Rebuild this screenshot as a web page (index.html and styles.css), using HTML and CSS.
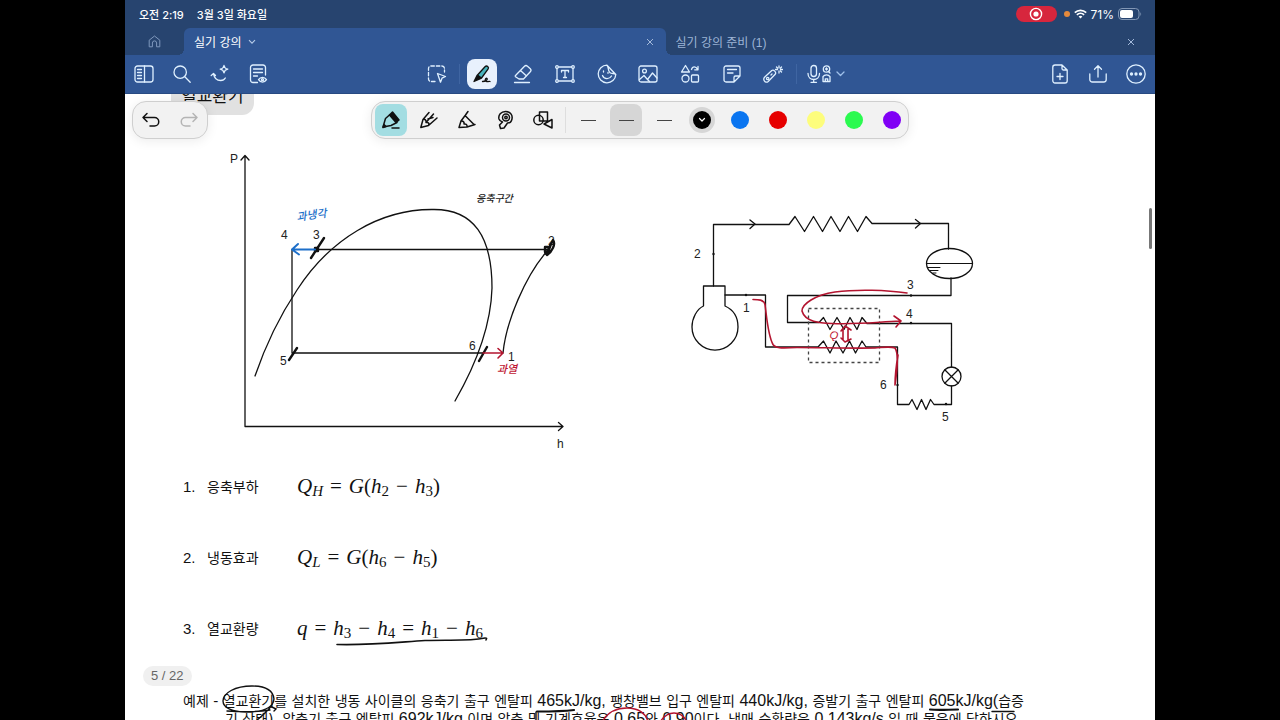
FILE: index.html
```html
<!DOCTYPE html>
<html lang="ko">

<head>
    <meta charset="UTF-8">
    <meta name="viewport" content="width=device-width, initial-scale=1.0">
    <title>실기 강의</title>
    <link rel="stylesheet" href="styles.css">
</head>

<body>
    <div class="app">
        <!-- Status bar -->
        <div class="status-bar">
            <div class="status-left">
                <span>오전 2:19</span>
                <span>3월 3일 화요일</span>
            </div>
            <div class="status-right">
                <span class="record">
                    <svg width="14" height="14" viewBox="0 0 14 14" fill="none" stroke="#fff" stroke-width="1.4"><circle cx="7" cy="7" r="5.6"/><circle cx="7" cy="7" r="2.6" fill="#fff" stroke="none"/></svg>
                </span>
                <span class="mic-dot"></span>
                <svg class="wifi" width="13" height="10" viewBox="0 0 13 10" fill="none" stroke="#fff" stroke-width="1.7"><path d="M.8 3.6a8.2 8.2 0 0 1 11.4 0M2.9 5.9a5.2 5.2 0 0 1 7.2 0"/><path d="M6.5 9.6 4.6 7.6a2.7 2.7 0 0 1 3.8 0z" fill="#fff" stroke="none"/></svg>
                <span class="battery-text">71%</span>
                <svg width="24" height="12" viewBox="0 0 24 12" fill="none"><rect x=".5" y=".5" width="20.5" height="11" rx="3.5" stroke="#8297b5"/><rect x="2" y="2" width="13" height="8" rx="2" fill="#fff"/><path d="M22.4 4.2c1 .5 1 3.1 0 3.6z" fill="#8297b5"/></svg>
            </div>
        </div>

        <!-- Document tabs -->
        <nav class="tabs">
            <button class="tab-home" aria-label="홈">
                <svg width="13" height="13" viewBox="0 0 13 13" fill="none" stroke="currentColor" stroke-linejoin="round"><path d="M1.2 5.2 6.5 1l5.3 4.2v6.6H8.6V8a2.1 2.1 0 0 0-4.2 0v3.8H1.2z"/></svg>
            </button>
            <div class="tab active">
                <a href="#">실기 강의</a>
                <svg class="tab-caret" width="8" height="6" viewBox="0 0 8 6" fill="none" stroke="currentColor" stroke-width="1.1"><path d="m1 1.2 3 3 3-3"/></svg>
                <button class="tab-close" aria-label="닫기"><svg width="8" height="8" viewBox="0 0 8 8" stroke="currentColor"><path d="m1 1 6 6M7 1 1 7"/></svg></button>
            </div>
            <div class="tab">
                <a href="#">실기 강의 준비 (1)</a>
                <button class="tab-close" aria-label="닫기"><svg width="8" height="8" viewBox="0 0 8 8" stroke="currentColor"><path d="m1 1 6 6M7 1 1 7"/></svg></button>
            </div>
        </nav>

        <!-- Main toolbar -->
        <header class="toolbar">
            <div class="tool-group">
                <button class="tool" aria-label="사이드바">
                    <svg viewBox="0 0 20 20"><rect x="1" y="2" width="18" height="16" rx="2.5"/><path d="M10.5 2v16M3.5 5.5h4M3.5 8.5h4M3.5 11.5h4M3.5 14.5h4"/></svg>
                </button>
                <button class="tool" aria-label="검색">
                    <svg viewBox="0 0 20 20"><circle cx="8.2" cy="8.2" r="6.2"/><path d="m12.8 12.8 5.4 5.4"/></svg>
                </button>
                <button class="tool" aria-label="AI">
                    <svg viewBox="0 0 20 20"><path d="M1.200 11.500 3.500 9.500l2 2M3.500 9.800c.8 4.500 4 6.700 7.200 6.700 2 0 3.800-1 4.600-2.500"/><path d="M14 1.500c.4 2.300 1.300 3.200 3.800 3.700-2.500.5-3.400 1.400-3.800 3.700-.4-2.300-1.300-3.200-3.800-3.700 2.500-.5 3.400-1.400 3.800-3.700z"/></svg>
                </button>
                <button class="tool" aria-label="문서 보기">
                    <svg viewBox="0 0 20 20"><path d="M9.500 18.500H5A2.500 2.500 0 0 1 2.500 16V3.500A2.500 2.500 0 0 1 5 1h10a2.500 2.500 0 0 1 2.500 2.500V11M5.500 5h9M5.500 8.500h9M5.500 12h4"/><path d="M10.500 15.700c2-3.200 6-3.200 8 0-2 3.200-6 3.200-8 0z"/><circle cx="14.500" cy="15.700" r="1"/></svg>
                </button>
            </div>

            <div class="tool-group tool-center">
                <button class="tool" aria-label="올가미">
                    <svg viewBox="0 0 20 20"><path stroke-dasharray="3.500 2" d="M8 17.500H4A2.500 2.500 0 0 1 1.500 15V4.500A2.500 2.500 0 0 1 4 2h11a2.500 2.500 0 0 1 2.500 2.500V8"/><path d="m10.500 9.500 8 3-3.500 1.700-1.500 4z"/></svg>
                </button>
                <span class="divider"></span>
                <div class="pens">
                    <button class="tool selected" aria-label="펜">
                        <svg viewBox="0 0 20 20"><path fill="#48b3bd" d="M5.500 11 13 2.700c1.800-1.800 4.500.3 3 2.500L9.500 14z"/><path fill="#111" d="m2 17.500 3-6 4 3z"/><path d="M10.500 17.500c3 0 5.500-2 4.500-3s-2.500 1.500-1.500 2.700 3-.2 4.500.3"/></svg>
                    </button>
                    <button class="tool" aria-label="지우개">
                        <svg viewBox="0 0 20 20"><path d="m2.500 11.500 9-9.300c1-1 2-1 3 0l2.800 2.600c1 1 1 2 0 3L10.500 15H6l-3.500-2.300c-.4-.4-.4-.8 0-1.200zM7.500 6.500l6 5.500M1.500 18.500h15"/></svg>
                    </button>
                    <button class="tool" aria-label="텍스트">
                        <svg viewBox="0 0 20 20"><path d="M2 3h16v14H2zM6.500 8V6.500h7V8M10 6.500v7M8.500 13.500h3"/><g fill="#305694"><circle cx="2" cy="3" r="1.300"/><circle cx="18" cy="3" r="1.300"/><circle cx="2" cy="17" r="1.300"/><circle cx="18" cy="17" r="1.300"/></g></svg>
                    </button>
                    <button class="tool" aria-label="스티커">
                        <svg viewBox="0 0 20 20"><path d="M10 1.200a8.800 8.800 0 1 0 8.800 9.300zM10 1.200c2 2 .5 5.500 3 7.500 1.700 1.300 4.500.3 5.800 1.800M5.500 11.500c1.500 4 7 4 9 .5"/><path d="M6.500 7v1M11 8.500v.8"/></svg>
                    </button>
                    <button class="tool" aria-label="이미지">
                        <svg viewBox="0 0 20 20"><rect x="1" y="2" width="18" height="16" rx="2"/><circle cx="6.500" cy="7" r="1.900"/><path d="m1.500 15.500 4.500-4 3.500 4L14.500 9l4.500 5M9.500 15.500l2 2"/></svg>
                    </button>
                    <button class="tool" aria-label="도형">
                        <svg viewBox="0 0 20 20"><path d="m5.500 1.500 4 6.500h-8zM11.500 5.500c1-3.500 4.500-3.500 6 0M18 2.500v3.300h-3.300"/><circle cx="5.500" cy="14.500" r="3.500"/><rect x="11.500" y="11" width="7" height="7" rx="1"/></svg>
                    </button>
                    <button class="tool" aria-label="메모">
                        <svg viewBox="0 0 20 20"><path d="M12 18H4a2 2 0 0 1-2-2V4a2 2 0 0 1 2-2h12a2 2 0 0 1 2 2v8zM12 18v-4.500a1.500 1.500 0 0 1 1.500-1.500H18M5.500 5.500h9M5.500 9h5.500"/></svg>
                    </button>
                    <button class="tool" aria-label="레이저">
                        <svg viewBox="0 0 20 20"><path d="m1.800 13 7-6.500c1.700-1.500 5 2 3.400 3.700l-7 7.300c-2.700 2.400-6-2-3.400-4.500z"/><circle cx="4.700" cy="14.500" r="1.200"/><path d="m8 11 1-1M16 2v2M16 7v2M12.500 5.500h2M17.500 5.500h2M13.500 3l1 1M17.500 7l1 1M18.500 3l-1 1"/></svg>
                    </button>
                </div>
                <span class="divider"></span>
                <button class="tool tool-wide" aria-label="녹음">
                    <svg class="wide" viewBox="0 0 26 20"><rect x="5" y="1.500" width="5.500" height="11" rx="2.700"/><path d="M2 9.500c0 8 11.500 8 11.500 0M7.700 15.500V18M5 18.300h5.500"/><circle cx="20.500" cy="5" r="3.200"/><path d="M19.500 5h2M20.500 4v2M22.500 7.500l1.500 1.500M17 17.500v-4.800c1.500-2.500 5.500-2.500 7 0v4.800zM19.300 17.500v-2.700h2.400v2.700"/></svg>
                    <svg class="caret" viewBox="0 0 9 6"><path d="m1 1 3.500 3.500L8 1"/></svg>
                </button>
            </div>

            <div class="tool-group tool-end">
                <button class="tool" aria-label="페이지 추가">
                    <svg viewBox="0 0 20 20"><path d="M12 1H5a2.200 2.200 0 0 0-2.200 2.200v13.600A2.200 2.200 0 0 0 5 19h10a2.200 2.200 0 0 0 2.200-2.200V6zM12 1v3.500A1.500 1.500 0 0 0 13.500 6h3.700M10 9.500v6M7 12.500h6"/></svg>
                </button>
                <button class="tool" aria-label="공유">
                    <svg viewBox="0 0 20 20"><path d="M1.800 10v5.500A2.500 2.500 0 0 0 4.300 18h11.400a2.500 2.500 0 0 0 2.500-2.500V10M10 13V2M6.500 5.200 10 1.700l3.500 3.500"/></svg>
                </button>
                <button class="tool" aria-label="더 보기">
                    <svg viewBox="0 0 20 20"><circle cx="10" cy="10" r="9.200"/><g fill="currentColor"><circle cx="5.500" cy="10" r="1"/><circle cx="10" cy="10" r="1"/><circle cx="14.500" cy="10" r="1"/></g></svg>
                </button>
            </div>
        </header>

        <!-- Note canvas -->
        <main class="canvas">
            <article class="note">
                <h1 class="note-title">열교환기</h1>

                <div class="diagrams">
                    <!-- P-h diagram -->
                    <svg class="diagram" width="350" height="305" viewBox="225 150 350 305">
                        <path d="M245 156V426.500H562M241 160l4-4.500 4 4.500M558.500 422.500l4.500 4-4.500 4"/>
                        <path d="M255 376C266 344 281 314 297 290C330 239 380 209 433 209.500C474 209 492 237 492 288C491 324 478 361 455 401"/>
                        <path d="M292 353V249.500M316 249.500h232M292 353h191M503 353C506 322 525 276 548 250"/>
                        <text x="230" y="163">P</text>
                        <text x="557" y="448">h</text>
                        <text x="281" y="239">4</text>
                        <text x="313" y="239">3</text>
                        <text x="548" y="245">2</text>
                        <text x="280" y="365">5</text>
                        <text x="469" y="350">6</text>
                        <text x="508" y="361">1</text>
                        <g class="pen-bold">
                            <path d="m311 258 13-20M289 360l8-12M479 361l8-14"/>
                            <path d="M315 248h3v3h-3zM545 247h4v5h-4zM546 254l7-14c3 4-1 12-6 15l4-11"/>
                        </g>
                        <path class="pen-blue" d="M315 249.500h-22M298 244l-6 5.500 7 5"/>
                        <path class="pen-red" d="M483 353h20M498 348.500l5 4.500-5 5"/>
                        <text class="hand hand-blue" transform="translate(297 221) rotate(-8)">과냉각</text>
                        <text class="hand hand-small" x="476" y="202">응축구간</text>
                        <text class="hand hand-red" x="497" y="373">과열</text>
                    </svg>

                    <!-- Refrigeration circuit -->
                    <svg class="diagram" width="300" height="305" viewBox="685 150 300 305">
                        <path d="M713.500 286v-61.500H789l6-8 9.500 15 9-15 9 15 8.500-15 9 15 8.500-15 9 15 8.500-15 6 7H948.500V249M951 278v17.500H787.500v27H819l4.500-5 6.500 12 7-12 7 12 6-12 7 12 5-12 5 6H951.500V367M951.500 386v18.500H934l-3.500-5-4.500 10-4.500-10-4.500 10-5-10-3 5h-11.500V347H866l-4-6-6.500 12-6-12-6.500 12-7-12-6 12-6.500-12-5.500 6H765.500v-52H725"/>
                        <path d="M703.500 286h21.500v20c9 4 13 12 13 21a23 23 0 1 1-46 0c0-9 5-18 11.500-21z"/>
                        <path d="m750 220 5 4-5 4.500M915.500 219.500l5 4-5 4.500"/>
                        <ellipse cx="949.500" cy="263.500" rx="23" ry="15"/>
                        <path class="thin" d="M926.500 263.500h46M928 267.500h12M930 270.500h8M933 273h3"/>
                        <circle cx="951.500" cy="376.500" r="9.500"/>
                        <path d="m945 370 13 13M958 370l-13 13"/>
                        <path class="dashed" d="M808.500 308.500h71v54h-71z"/>
                        <g class="nodes"><circle cx="713.500" cy="254" r="1.200"/><circle cx="746" cy="295" r="1.200"/><circle cx="911" cy="295.500" r="1.200"/><circle cx="911" cy="323" r="1.200"/><circle cx="946" cy="404" r="1.200"/><circle cx="897.500" cy="385" r="1.200"/></g>
                        <text x="694" y="258">2</text>
                        <text x="743" y="312">1</text>
                        <text x="907" y="289">3</text>
                        <text x="906" y="318">4</text>
                        <text x="942" y="421">5</text>
                        <text x="880" y="389">6</text>
                        <g class="pen-red">
                            <path d="M753 299.500c5 0 11 0 12 5 2 15 3 31 8 40 3 5 14 3 24 3 22 0 55 1 78 .5 7-.5 15-2 20 0 5 7 1 29 0 37 0-8 1-18 3-30"/>
                            <path d="M907 293c-20-3-50-4-72-1-20 3-33 12-33 19 3 11 18 12 30 12.500 25 1 40-1 68-2.500M894 316l7 5-5 6"/>
                            <path d="M843 330v10M848 328v13M841 331l4-5 6 4M841 338l4 4 6-3"/>
                        </g>
                        <text class="hand hand-red" transform="translate(829 338) rotate(12)">Q</text>
                    </svg>
                </div>

                <ol class="formulas">
                    <li>
                        <span class="num">1.</span><span class="name">응축부하</span>
                        <span class="math"><i>Q</i><sub><i>H</i></sub><b>=</b><i>G</i>(<i>h</i><sub>2</sub><b>−</b><i>h</i><sub>3</sub>)</span>
                    </li>
                    <li>
                        <span class="num">2.</span><span class="name">냉동효과</span>
                        <span class="math"><i>Q</i><sub><i>L</i></sub><b>=</b><i>G</i>(<i>h</i><sub>6</sub><b>−</b><i>h</i><sub>5</sub>)</span>
                    </li>
                    <li>
                        <span class="num">3.</span><span class="name">열교환량</span>
                        <span class="math"><i>q</i><b>=</b><i>h</i><sub>3</sub><b>−</b><i>h</i><sub>4</sub><b>=</b><i>h</i><sub>1</sub><b>−</b><i>h</i><sub>6</sub>
                            <svg class="underline" width="154" height="10" viewBox="0 0 154 10"><path d="M1 8.500c30 1 58-2 88-4 25-1 42 1 60-2.500 2 0 2 0 1 2"/></svg>
                        </span>
                    </li>
                </ol>

                <div class="example">
                    <p>예제 - 열교환기를 설치한 냉동 사이클의 응축기 출구 엔탈피 <span>465kJ/kg,</span> 팽창밸브 입구 엔탈피 <span>440kJ/kg,</span> 증발기 출구 엔탈피 <span>605kJ/kg(</span>습증<br>기 상태), 압축기 출구 엔탈피 <span>692kJ/kg</span> 이며 압축 및 기계효율은 <span>0.65</span>와 <span>0.90</span>이다. 냉매 순환량은 <span>0.143kg/s</span> 일 때 물음에 답하시오.</p>
                    <svg class="ink" width="850" height="50" viewBox="183 680 850 50">
                        <path d="M274 699c-1-9-9-13-22-13-17 0-29 7-29 15 0 7 10 11 23 11 15 0 27-3 28-13M274 699c-1 8-9 14-18 22M272 707l4 2-2 2M227 711c15 1 30 1 43-1"/>
                        <path class="bold" d="M537 711.500c12 0 25 0 37-1.500M930 709.500c10 1 18 0 28 0"/>
                        <path d="M536 712v8M992 711.500h22"/>
                        <path class="red" d="M602 722c5-9 14-14 25-14s19 5 21 14M660 722c4-6 9-9 14-9s10 3 13 9"/>
                    </svg>
                </div>
            </article>

            <div class="history">
                <button aria-label="실행 취소"><svg viewBox="0 0 20 16"><path d="M6 1.500 2 5.500l4 4M2 5.500h11.500a4 4 0 0 1 0 8.500H9"/></svg></button>
                <button aria-label="다시 실행" disabled><svg viewBox="0 0 20 16"><path d="m14 1.500 4 4-4 4M18 5.500H6.500a4 4 0 0 0 0 8.500H11"/></svg></button>
            </div>

            <div class="palette">
                <button class="pen-on" aria-label="만년필"><svg viewBox="0 0 20 20"><path d="m2 17 2.500-8.500L9 4.500l7 8-6 3z"/><path fill="#111" d="m8.500 5 3-3 6.500 8-3 2.500zM2 17.500l1-3 2 2z"/><path d="M11 18h7"/></svg></button>
                <button aria-label="볼펜"><svg viewBox="0 0 20 20"><path d="M10 2.500 4 9.500 1.800 17.500 9.500 15.500 18 8M4 9.500c2-.5 3.500.5 3 3 2.500-.5 3.500 1 2.500 3M7 12.500 14.500 4M9 9l5-1.500"/></svg></button>
                <button aria-label="브러시"><svg viewBox="0 0 20 20"><path d="M11 1.500 8.500 5 4 11l-2 6.500 8-.5 8-2.500M8 5.500l9 9M4 11c2-.3 3.500 1 3 3 2-.5 3.500 1 3 3"/></svg></button>
                <button aria-label="테이프"><svg viewBox="0 0 20 20"><path d="M16.500 10.500c2-5-1-9-6-9C6 1.500 3 5 4 9c.5 1.500 2 2.500 3.500 3L4.500 15l1 3.500 3.500-.500 3.500-5c2 0 3.500-1 4-2.500z"/><circle cx="11" cy="7.500" r="3.500"/><circle cx="11" cy="7.500" r="1.200"/></svg></button>
                <button aria-label="도형 펜"><svg viewBox="0 0 20 20"><circle cx="5.500" cy="10" r="4.700"/><path d="M6.500 2h8v9h-8zM11 14l8-4.500v8.500z"/></svg></button>
                <span class="palette-divider"></span>
                <button aria-label="얇게"><span class="stroke"></span></button>
                <button class="stroke-on" aria-label="보통"><span class="stroke"></span></button>
                <button aria-label="굵게"><span class="stroke"></span></button>
                <button class="color-on" aria-label="검정"><span class="swatch black"><svg viewBox="0 0 8 6"><path d="m1.500 1.500 2.500 2.500 2.500-2.500"/></svg></span></button>
                <button aria-label="파랑"><span class="swatch blue"></span></button>
                <button aria-label="빨강"><span class="swatch red"></span></button>
                <button aria-label="노랑"><span class="swatch yellow"></span></button>
                <button aria-label="초록"><span class="swatch green"></span></button>
                <button aria-label="보라"><span class="swatch purple"></span></button>
            </div>

            <div class="page-count">5 / 22</div>
            <div class="scroll-thumb"></div>
        </main>
    </div>
</body>

</html>
```
FILE: styles.css
```css
* {
    box-sizing: border-box;
}

body {
    margin: 0;
    background: #000;
    font-family: "Liberation Sans", "Noto Sans CJK KR", sans-serif;
    color: #111;
}

button {
    border: 0;
    padding: 0;
    background: none;
    color: inherit;
    display: flex;
    align-items: center;
    justify-content: center;
}

.app {
    height: 100vh;
    margin: 0 125px;
    display: flex;
    flex-direction: column;
    background: #fff;
    overflow: hidden;
}

/* Status bar */
.status-bar {
    height: 28px;
    flex: none;
    padding: 0 13px 0 14px;
    display: flex;
    align-items: center;
    justify-content: space-between;
    background: #27446f;
    color: #fff;
    font-family: Inter, "Noto Sans CJK KR", sans-serif;
    font-size: 11px;
    font-weight: 500;
}

.status-left {
    display: flex;
    gap: 13px;
}

.status-right {
    display: flex;
    align-items: center;
}

.record {
    width: 41px;
    height: 16px;
    margin-right: 7px;
    border-radius: 8px;
    background: #d7263d;
    display: flex;
    align-items: center;
    justify-content: center;
}

.mic-dot {
    width: 6px;
    height: 6px;
    margin-right: 4px;
    border-radius: 50%;
    background: #e58a3c;
}

.battery-text {
    margin: 0 4px;
    font-size: 12px;
    font-weight: 400;
}

/* Tabs */
.tabs {
    height: 27px;
    flex: none;
    display: flex;
    padding-right: 8px;
    background: #27446f;
    font-size: 12px;
}

.tab-home {
    width: 59px;
    color: #7f98bd;
}

.tab {
    flex: 1;
    display: flex;
    align-items: center;
    padding: 0 10px;
    color: #9db4d6;
    position: relative;
}

.tab a {
    color: inherit;
    text-decoration: none;
}

.tab.active {
    background: #305694;
    color: #fff;
    border-radius: 6px 6px 0 0;
}

.tab.active::before,
.tab.active::after {
    content: '';
    position: absolute;
    bottom: 0;
    width: 6px;
    height: 6px;
}

.tab.active::before {
    left: -6px;
    background: radial-gradient(circle at 0 0, transparent 6px, #305694 6px);
}

.tab.active::after {
    right: -6px;
    background: radial-gradient(circle at 100% 0, transparent 6px, #305694 6px);
}

.tab-caret {
    margin-left: 6px;
    color: #b6cbe8;
}

.tab-close {
    width: 12px;
    height: 12px;
    margin-left: auto;
    color: #a3b9da;
}

/* Toolbar */
.toolbar {
    height: 39px;
    flex: none;
    padding: 0 4px;
    display: grid;
    grid-template-columns: 1fr auto 1fr;
    align-items: center;
    background: #305694;
    border-bottom: 1px solid #284a82;
    color: #dff0ff;
}

.tool-group {
    display: flex;
    align-items: center;
    gap: 8px;
}

.tool-center {
    gap: 0;
    margin-right: 11px;
}

.tool-end {
    justify-content: flex-end;
}

.tool {
    width: 30px;
    height: 30px;
    border-radius: 8px;
}

.tool svg {
    width: 20px;
    height: 20px;
    fill: none;
    stroke: currentColor;
    stroke-width: 1.3;
    stroke-linecap: round;
    stroke-linejoin: round;
}

.tool.selected {
    background: #e8f1fd;
    color: #111;
}

.tool-wide {
    width: 44px;
    gap: 4px;
}

.tool svg.wide {
    width: 26px;
}

.tool svg.caret {
    width: 9px;
    height: 6px;
    color: #9fc0ea;
}

.divider {
    width: 1px;
    height: 20px;
    margin: 0 7px;
    background: #3f65a2;
}

.pens {
    width: 322px;
    display: flex;
    justify-content: space-between;
}

/* Canvas */
.canvas {
    flex: 1;
    position: relative;
    overflow: hidden;
}

.note {
    padding: 0 58px;
}

.note-title {
    width: max-content;
    height: 32px;
    margin: -11px 0 35px -12px;
    padding: 0 10px;
    border-radius: 0 0 12px 12px;
    background: #e1e1e1;
    font-size: 17px;
    font-weight: 400;
    line-height: 28px;
}

.diagrams {
    display: flex;
    gap: 110px;
    padding-left: 42px;
}

.diagram {
    flex: none;
    fill: none;
    stroke: #111;
    stroke-width: 1.3;
    stroke-linejoin: round;
    stroke-linecap: round;
}

.diagram text {
    fill: #222;
    stroke: none;
    font-size: 12px;
}

.diagram .thin {
    stroke-width: 1;
}

.diagram .dashed {
    stroke: #444;
    stroke-dasharray: 3 3;
    stroke-linecap: butt;
}

.diagram .nodes {
    fill: #111;
    stroke: none;
}

.diagram .pen-bold {
    stroke-width: 2.4;
}

.diagram .pen-blue {
    stroke: #1d6fc9;
    stroke-width: 2;
}

.diagram .pen-red {
    stroke: #b3142f;
    stroke-width: 1.6;
}

.diagram .hand {
    font-size: 11px;
    font-weight: 500;
    font-style: italic;
}

.diagram .hand-small {
    font-size: 10px;
}

.diagram .hand-blue {
    fill: #1d6fc9;
}

.diagram .hand-red {
    fill: #c01733;
}

/* Formulas */
.formulas {
    list-style: none;
    margin: 19px 0 0;
    padding: 0;
    display: flex;
    flex-direction: column;
    gap: 47px;
}

.formulas li {
    height: 24px;
    display: flex;
    align-items: center;
    font-size: 14px;
}

.num {
    width: 24px;
    font-size: 15px;
}

.name {
    width: 90px;
}

.math {
    position: relative;
    font-family: "Liberation Serif", serif;
    font-size: 21px;
    line-height: 24px;
    white-space: nowrap;
}

.math sub {
    font-size: 15px;
    line-height: 0;
    vertical-align: -3px;
}

.math b {
    margin: 0 7px;
    font-weight: 400;
}

.underline {
    position: absolute;
    left: 39px;
    bottom: -6px;
    fill: none;
    stroke: #111;
    stroke-width: 1.6;
    stroke-linecap: round;
}

/* Example text */
.example {
    position: relative;
    margin-top: 52px;
}

.example p {
    margin: 0;
    padding-left: 42px;
    text-indent: -42px;
    font-family: "DejaVu Sans", "Noto Sans CJK KR", sans-serif;
    font-size: 14px;
    line-height: 18px;
    white-space: nowrap;
}

.example span {
    font-family: "Liberation Sans", sans-serif;
    font-size: 16px;
    line-height: 16px;
}

.ink {
    position: absolute;
    left: 0;
    top: -12px;
    fill: none;
    stroke: #111;
    stroke-width: 1.4;
    stroke-linecap: round;
}

.ink .bold {
    stroke-width: 2.2;
}

.ink .red {
    stroke: #b3142f;
}

/* Floating controls */
.history,
.palette {
    position: absolute;
    top: 7px;
    height: 38px;
    display: flex;
    align-items: center;
    border: 1px solid #cfcfcf;
    border-radius: 14px;
    background: #f2f2f2;
    box-shadow: 0 2px 12px rgba(0, 0, 0, 0.08);
}

.history {
    left: 7px;
    gap: 6px;
    padding: 0 2px;
}

.history button,
.palette button {
    width: 32px;
    height: 32px;
    border-radius: 8px;
    color: #111;
}

.history svg,
.palette svg {
    width: 20px;
    height: 20px;
    fill: none;
    stroke: currentColor;
    stroke-width: 1.5;
    stroke-linecap: round;
    stroke-linejoin: round;
}

.history button:disabled {
    color: #b4b4b4;
}

.palette {
    left: 50%;
    transform: translateX(-50%);
    gap: 6px;
    padding-left: 3px;
}

.palette .pen-on {
    background: #a3dde2;
}

.palette .stroke-on {
    background: #d6d6d6;
}

.palette-divider {
    width: 1px;
    height: 26px;
    background: #dedede;
}

.stroke {
    width: 15px;
    height: 1px;
    background: #444;
}

.swatch {
    width: 18px;
    height: 18px;
    border-radius: 50%;
    display: flex;
    align-items: center;
    justify-content: center;
}

.color-on .swatch {
    box-shadow: 0 0 0 4px #d6d6d6;
}

.palette .swatch svg {
    width: 8px;
    height: 6px;
    stroke-width: 1.2;
    color: #fff;
}

.black { background: #000; }
.blue { background: #0a75f0; }
.red { background: #e60000; }
.yellow { background: #fdfd7c; }
.green { background: #2bfa50; }
.purple { background: #8000f5; }

.page-count {
    position: absolute;
    left: 18px;
    bottom: 34px;
    padding: 0 8px;
    border-radius: 10px;
    background: #f0f0f0;
    color: #666;
    font-size: 13px;
    line-height: 20px;
}

.scroll-thumb {
    position: absolute;
    right: 3px;
    top: 114px;
    width: 3px;
    height: 41px;
    border-radius: 2px;
    background: #777;
}
```
